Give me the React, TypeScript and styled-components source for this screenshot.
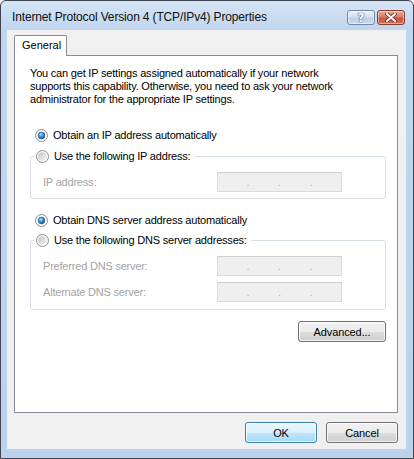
import React from 'react';
import styled, { createGlobalStyle } from 'styled-components';

const GlobalStyle = createGlobalStyle`
	html, body {
		margin: 0;
		padding: 0;
		background: #ffffff;
	}
	* {
		box-sizing: border-box;
	}
`;

const Window = styled.div`
	width: 414px;
	height: 459px;
	display: flex;
	flex-direction: column;
	border: 1px solid #3e4550;
	border-radius: 6px 6px 0 0;
	background: linear-gradient(180deg, #d6e5f6 0, #c0d5ee 29px, #bcd2ec 100%);
	font-family: 'Liberation Sans', Arial, sans-serif;
	font-size: 11px;
	color: #000;
`;
const TitleBar = styled.div`
	height: 29px;
	display: flex;
	align-items: flex-start;
	padding: 0 8px 0 11px;
`;
const Title = styled.div`
	padding-top: 9px;
	font-size: 12px;
	line-height: 14px;
	letter-spacing: -0.15px;
	color: #101010;
`;
const CaptionButtons = styled.div`
	margin-left: auto;
	padding-top: 9px;
	display: flex;
	gap: 2px;
`;
const CaptionButton = styled.div<{ $close?: boolean }>`
	width: 28px;
	height: 15px;
	display: flex;
	align-items: center;
	justify-content: center;
	border-radius: 3px;
	border: 1px solid ${({ $close }) => ($close ? '#8a3d30' : '#74889f')};
	background: ${({ $close }) =>
		$close
			? 'linear-gradient(180deg, #e8ab98 0%, #d4806b 45%, #c4553e 55%, #cf6f55 100%)'
			: 'linear-gradient(180deg, #e9f0f9 0%, #d3e0f0 45%, #bccfe7 55%, #c9daee 100%)'};
	box-shadow: inset 0 0 0 1px rgba(255, 255, 255, 0.45);
	span {
		font-family: 'DejaVu Sans', sans-serif;
		font-weight: bold;
		font-size: 12px;
		line-height: 12px;
		color: #fff;
		text-shadow: 0 0 1px #3f5270, 0 0 1px #3f5270, 0 0 1px #3f5270;
	}
`;
const Client = styled.div`
	flex: 1;
	margin: 0 7px 9px 6px;
	background: #f0f0f0;
	display: flex;
	flex-direction: column;
	padding: 5px 8px 6px 7px;
`;
const TabStrip = styled.div`
	display: flex;
`;
const Tab = styled.div`
	position: relative;
	z-index: 1;
	width: 53px;
	height: 21px;
	margin-bottom: -1px;
	padding: 0 7px;
	border: 1px solid #898c95;
	border-bottom: none;
	border-radius: 2px 2px 0 0;
	background: #fff;
	line-height: 19px;
`;
const Panel = styled.div`
	flex: 1;
	display: flex;
	flex-direction: column;
	border: 1px solid #898c95;
	background: #fff;
	padding: 11px 11px 0 15px;
`;
const Intro = styled.p`
	margin: 0;
	line-height: 13px;
	letter-spacing: -0.2px;
`;
const RadioRow = styled.div<{ $top?: number }>`
	display: flex;
	align-items: center;
	gap: 5px;
	height: 16px;
	margin-top: ${({ $top }) => $top ?? 0}px;
	padding-left: 5px;
	letter-spacing: -0.2px;
	white-space: nowrap;
`;
const GroupBox = styled.fieldset<{ $top: number }>`
	margin: ${({ $top }) => $top}px 0 0;
	padding: 0;
	min-width: 0;
	border: 1px solid #d5dfe5;
	border-radius: 3px;
`;
const Legend = styled.legend`
	margin-left: 3px;
	padding: 0 4px 0 1px;
	height: 16px;
	${RadioRow} {
		padding-left: 1px;
	}
`;
const GroupBody = styled.div<{ $bottom: number }>`
	display: flex;
	flex-direction: column;
	gap: 6px;
	padding: 8px 12px ${({ $bottom }) => $bottom}px;
`;
const FieldRow = styled.div`
	display: flex;
	align-items: center;
	height: 20px;
`;
const FieldLabel = styled.span`
	width: 174px;
	color: #a3a3a3;
	letter-spacing: -0.2px;
`;
const IpBox = styled.div`
	width: 125px;
	height: 20px;
	display: flex;
	align-items: flex-end;
	padding: 0 0 3px;
	border: 1px solid #dadada;
	border-top-color: #cfcfcf;
	background: #efefef;
`;
const IpSegment = styled.span`
	flex: 1;
`;
const IpDot = styled.span`
	color: #b4b4b4;
	line-height: 11px;
`;
const AdvancedRow = styled.div`
	display: flex;
	justify-content: flex-end;
	margin-top: 11px;
`;
const Footer = styled.div`
	display: flex;
	justify-content: flex-end;
	gap: 9px;
	margin-top: 9px;
`;
const DialogButton = styled.button<{ $default?: boolean; $width: number }>`
	width: ${({ $width }) => $width}px;
	height: 21px;
	padding: 0;
	border-radius: 3px;
	border: 1px solid ${({ $default }) => ($default ? '#3c7fb1' : '#707070')};
	background: ${({ $default }) =>
		$default
			? 'linear-gradient(180deg, #eaf6fd 0%, #d9f0fc 50%, #bee6fd 51%, #a7d9f5 100%)'
			: 'linear-gradient(180deg, #f2f2f2 0%, #ebebeb 50%, #dddddd 51%, #cfcfcf 100%)'};
	box-shadow: inset 0 0 0 1px rgba(255, 255, 255, 0.75);
	font-family: 'Liberation Sans', Arial, sans-serif;
	font-size: 11px;
	color: #000;
	letter-spacing: -0.1px;
`;

const Radio: React.FunctionComponent<{ checked?: boolean }> = ({ checked }) => (
	<svg width="13" height="13" viewBox="0 0 13 13">
		<defs>
			<linearGradient id="rOuter" x1="0" y1="0" x2="1" y2="1">
				<stop offset="0" stopColor="#f4f4f4" />
				<stop offset="1" stopColor="#ffffff" />
			</linearGradient>
			<linearGradient id="rInner" x1="0" y1="0" x2="1" y2="1">
				<stop offset="0" stopColor="#c2c2c2" />
				<stop offset="1" stopColor="#f8f8f8" />
			</linearGradient>
			<radialGradient id="rDot" cx="0.4" cy="0.35" r="0.7">
				<stop offset="0" stopColor="#b6e3fb" />
				<stop offset="0.45" stopColor="#3d95d6" />
				<stop offset="1" stopColor="#0f4d86" />
			</radialGradient>
		</defs>
		<circle cx="6.5" cy="6.5" r="6" fill="url(#rOuter)" stroke="#8e8f8f" />
		{checked ? (
			<circle cx="6.5" cy="6.5" r="3.4" fill="url(#rDot)" stroke="#2a5d8c" strokeWidth="0.6" />
		) : (
			<circle cx="6.5" cy="6.5" r="4.3" fill="url(#rInner)" />
		)}
	</svg>
);

const CloseGlyph = () => (
	<svg width="12" height="9" viewBox="0 0 12 9">
		<path d="M2 1 L10 8 M10 1 L2 8" stroke="#6e2a1d" strokeWidth="3.6" strokeLinecap="round" />
		<path d="M2 1 L10 8 M10 1 L2 8" stroke="#ffffff" strokeWidth="2" strokeLinecap="round" />
	</svg>
);

const IpField = () => (
	<IpBox>
		<IpSegment />
		<IpDot>.</IpDot>
		<IpSegment />
		<IpDot>.</IpDot>
		<IpSegment />
		<IpDot>.</IpDot>
		<IpSegment />
	</IpBox>
);

const App: React.FunctionComponent = () => {
	return (
		<>
			<GlobalStyle />
			<Window>
				<TitleBar>
					<Title>Internet Protocol Version 4 (TCP/IPv4) Properties</Title>
					<CaptionButtons>
						<CaptionButton>
							<span>?</span>
						</CaptionButton>
						<CaptionButton $close>
							<CloseGlyph />
						</CaptionButton>
					</CaptionButtons>
				</TitleBar>
				<Client>
					<TabStrip>
						<Tab>General</Tab>
					</TabStrip>
					<Panel>
						<Intro>
							You can get IP settings assigned automatically if your network
							<br />
							supports this capability. Otherwise, you need to ask your network
							<br />
							administrator for the appropriate IP settings.
						</Intro>
						<RadioRow $top={21}>
							<Radio checked />
							Obtain an IP address automatically
						</RadioRow>
						<GroupBox $top={5}>
							<Legend>
								<RadioRow>
									<Radio />
									Use the following IP address:
								</RadioRow>
							</Legend>
							<GroupBody $bottom={6}>
								<FieldRow>
									<FieldLabel>IP address:</FieldLabel>
									<IpField />
								</FieldRow>
							</GroupBody>
						</GroupBox>
						<RadioRow $top={13}>
							<Radio checked />
							Obtain DNS server address automatically
						</RadioRow>
						<GroupBox $top={4}>
							<Legend>
								<RadioRow>
									<Radio />
									Use the following DNS server addresses:
								</RadioRow>
							</Legend>
							<GroupBody $bottom={7}>
								<FieldRow>
									<FieldLabel>Preferred DNS server:</FieldLabel>
									<IpField />
								</FieldRow>
								<FieldRow>
									<FieldLabel>Alternate DNS server:</FieldLabel>
									<IpField />
								</FieldRow>
							</GroupBody>
						</GroupBox>
						<AdvancedRow>
							<DialogButton $width={88}>Advanced...</DialogButton>
						</AdvancedRow>
					</Panel>
					<Footer>
						<DialogButton $default $width={72}>
							OK
						</DialogButton>
						<DialogButton $width={72}>Cancel</DialogButton>
					</Footer>
				</Client>
			</Window>
		</>
	);
};

export default App;
